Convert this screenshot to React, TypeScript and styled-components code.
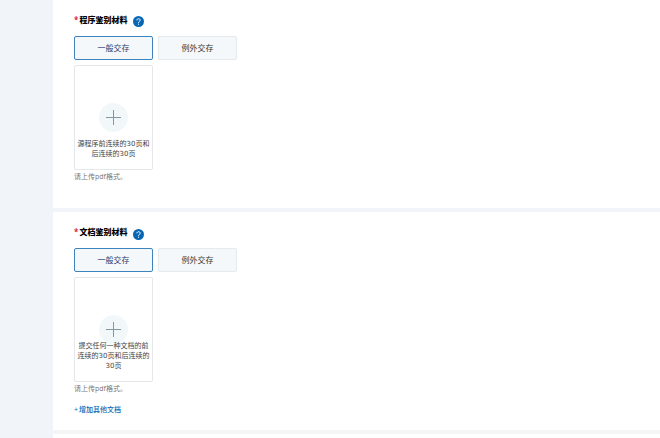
import React, { useState } from "react";
import styled, { createGlobalStyle } from "styled-components";

const GlobalStyle = createGlobalStyle`
  * { box-sizing: border-box; }
  body {
    margin: 0;
    background: #fff;
    color: #333;
    font-family: "Open Sans", "Noto Sans CJK SC", sans-serif;
    font-size: 7px;
    line-height: 10px;
  }
  button { font: inherit; color: inherit; cursor: pointer; }
`;

const Page = styled.div`
  display: flex;
  min-height: 100vh;
  background: #f1f5f9;
`;

const SideGutter = styled.div`
  flex: 0 0 53px;
`;

const Main = styled.main`
  flex: 1;
  min-width: 0;
  display: flex;
  flex-direction: column;
`;

const Section = styled.section<{ $bottom: number; $edge: string }>`
  display: flex;
  flex-direction: column;
  align-items: flex-start;
  padding: 14px 21px ${(p) => p.$bottom}px;
  background: #fff;
  border-bottom: 4px solid ${(p) => p.$edge};
`;

const NextSection = styled.div`
  flex: 1;
  min-height: 4px;
  background: #fff;
`;

const TitleRow = styled.div<{ $align: string }>`
  display: flex;
  align-items: ${(p) => p.$align};
  gap: 6px;
  height: 14px;
  margin-bottom: 8px;
`;

const Title = styled.h2`
  display: flex;
  align-self: flex-start;
  gap: 1px;
  margin: 0;
  color: #000;
  font-size: 8px;
  font-weight: 900;
  line-height: 12px;
`;

const Required = styled.span`
  color: #e60012;
  font-weight: 600;
`;

const HelpButton = styled.button`
  display: grid;
  place-items: center;
  width: 11px;
  height: 11px;
  padding: 0;
  border: 0;
  border-radius: 50%;
  background: #0867b5;
  color: #fff;
`;

const TabRow = styled.div`
  display: flex;
  gap: 5px;
  margin-bottom: 5px;
`;

const Tab = styled.button<{ $active: boolean }>`
  width: 79px;
  height: 24px;
  padding: 0;
  border: 1px solid ${(p) => (p.$active ? "#3d84be" : "#e4eaed")};
  border-radius: 2px;
  background: #f4f8fa;
  color: ${(p) => (p.$active ? "#2a3a70" : "#333")};
  font-size: 8px;
`;

const UploadBox = styled.button`
  display: grid;
  width: 79px;
  height: 105px;
  padding: 0;
  border: 1px solid #e4e8eb;
  border-radius: 2px;
  background: #fff;
  color: #444;
`;

const PlusCircle = styled.span`
  grid-area: 1 / 1;
  place-self: center;
  display: grid;
  place-items: center;
  width: 29px;
  height: 29px;
  border-radius: 50%;
  background: #f2f8fa;
`;

const UploadText = styled.span`
  grid-area: 1 / 1;
  place-self: end center;
  padding: 0 1px 10px;
  font-family: "DejaVu Sans", "Noto Sans CJK SC", sans-serif;
  text-align: center;
`;

const Hint = styled.p`
  margin: 2px 0 0;
  color: #777;
`;

const AddLink = styled.a`
  display: flex;
  gap: 1px;
  margin-top: 11px;
  color: #0867b5;
  font-weight: 500;
  text-decoration: none;
`;

type MaterialProps = {
  title: string;
  description: string;
  bottom: number;
  edge: string;
  helpAlign: string;
  addLabel?: string;
};

function Material({ title, description, bottom, edge, helpAlign, addLabel }: MaterialProps) {
  const [active, setActive] = useState(0);
  return (
    <Section $bottom={bottom} $edge={edge}>
      <TitleRow $align={helpAlign}>
        <Title><Required>*</Required>{title}</Title>
        <HelpButton type="button" aria-label="帮助">
          <svg width="11" height="11" viewBox="0 0 11 11" fill="none" stroke="currentColor" aria-hidden="true">
            <path d="M3.9 4.3C3.9 2.2 7.2 2.2 7.2 4.2C7.2 5.4 5.5 5.4 5.5 6.8" />
            <path d="M5.5 7.7V8.7" />
          </svg>
        </HelpButton>
      </TitleRow>
      <TabRow>
        {["一般交存", "例外交存"].map((label, i) => (
          <Tab key={label} type="button" $active={i === active} aria-pressed={i === active} onClick={() => setActive(i)}>
            {label}
          </Tab>
        ))}
      </TabRow>
      <UploadBox type="button">
        <PlusCircle>
          <svg width="15" height="15" viewBox="0 0 15 15" stroke="#8296a3" aria-hidden="true">
            <path d="M0 7.5H15M7.5 0V15" />
          </svg>
        </PlusCircle>
        <UploadText>{description}</UploadText>
      </UploadBox>
      <Hint>请上传pdf格式。</Hint>
      {addLabel && <AddLink href="#add"><span>+</span>{addLabel}</AddLink>}
    </Section>
  );
}

export default function App() {
  return (
    <>
      <GlobalStyle />
      <Page>
        <SideGutter />
        <Main>
          <Material
            title="程序鉴别材料"
            description="源程序前连续的30页和后连续的30页"
            bottom={26}
            edge="#f1f5f9"
            helpAlign="center"
          />
          <Material
            title="文档鉴别材料"
            description="提交任何一种文档的前连续的30页和后连续的30页"
            bottom={15}
            edge="#f5f5f5"
            helpAlign="flex-end"
            addLabel="增加其他文档"
          />
          <NextSection />
        </Main>
      </Page>
    </>
  );
}
